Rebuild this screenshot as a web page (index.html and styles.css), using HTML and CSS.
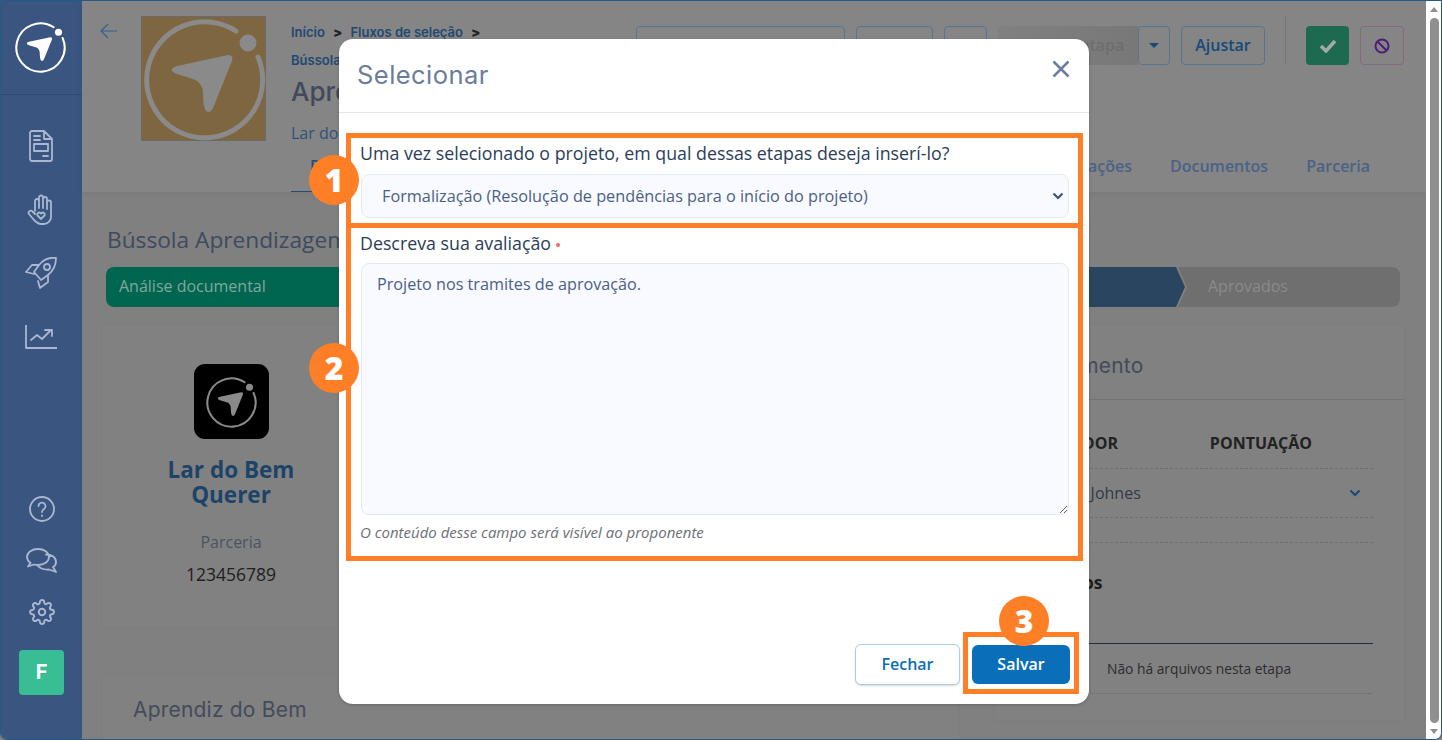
FILE: index.html
```html
<!DOCTYPE html>
<html lang="pt-BR">
	<head>
		<meta charset="utf-8" />
		<title>Selecionar</title>
		<link rel="stylesheet" href="styles.css">
	</head>
	<body>
		<svg class="defs" width="0" height="0">
			<symbol id="brand" viewBox="0 0 125 125">
				<path d="M117 41A58 58 0 1 1 95 15" fill="none" stroke="currentColor" stroke-width="5" stroke-linecap="round" />
				<circle cx="107" cy="27" r="8.5" fill="currentColor" />
				<path d="M87 39Q93 39 91 45L72 92Q69 98 65 95Q62 91 62 78Q62 66 52 63L36 58Q30 56 31 53Q32 51 36 50Z" fill="currentColor" />
			</symbol>
		</svg>

		<div id="wrapper">
			<nav class="sidebar">
				<div class="brand">
					<svg width="52" height="52"><use href="#brand" /></svg>
				</div>
				<div class="side-top">
					<svg width="24" height="32" viewBox="0 0 24 32"><path d="M3 1H15L23 9V29a2 2 0 0 1-2 2H3a2 2 0 0 1-2-2V3a2 2 0 0 1 2-2ZM15 1V9H23M5 6H11M5 10H11M5 14H19V21H5ZM14 26H19" /></svg>
					<svg width="28" height="31" viewBox="0 0 28 31"><path d="M8 17V7a2 2 0 0 1 4 0V3.500a2 2 0 0 1 4 0V5a2 2 0 0 1 4 0V8.500a2 2 0 0 1 4 0V23a7 7 0 0 1-7 7H14c-3 0-5-2-7-4L2 20c-1.500-2 1-4 3-3L8 20M12 7V14M16 5V14M20 8.500V15M14 25L10.500 21.500a2 2 0 0 1 3-2.500L14 19.500L14.500 19a2 2 0 0 1 3 2.500Z" /></svg>
					<svg width="32" height="32" viewBox="0 0 32 32"><path d="M31 1C24 0 18 3 14 8L9 15L16 23L23 18C28 14 31 8 31 1ZM14 8H7L1 15L9 17M23 18V25L15 31L13 24" /><circle cx="22" cy="10" r="3" /></svg>
					<svg class="side-chart" width="32" height="24" viewBox="0 0 32 24"><path d="M1 0V23H32M6 15L12 10L17 14L25 6M20 5H27V11" /></svg>
				</div>
				<div class="side-bottom">
					<svg width="26" height="26" viewBox="0 0 26 26"><circle cx="13" cy="13" r="12" /><path d="M9.500 10a3.500 3.500 0 1 1 5.500 3c-1.300.8-2 1.500-2 3M13 19.500V20" /></svg>
					<svg width="31" height="25" viewBox="0 0 31 25"><path d="M12 1C6 1 1 4.500 1 9c0 2.500 1.500 4.500 3.500 6L2 18.500L8 16.500C9.500 17 11 17 12 17c6 0 11-3.500 11-8S18 1 12 1ZM20 6.500C26 6.500 30 9.500 30 14c0 2-1 4-3 5L30 24L23 21.500C18 22 14 20.500 11 17" /></svg>
					<svg width="26" height="26" viewBox="0 0 24 24"><path d="M12 15a3 3 0 1 0 0-6 3 3 0 0 0 0 6z" /><path d="M19.400 15a1.650 1.650 0 0 0 .33 1.820l.06.06a2 2 0 0 1 0 2.830 2 2 0 0 1-2.830 0l-.06-.06a1.650 1.650 0 0 0-1.820-.33 1.650 1.650 0 0 0-1 1.510V21a2 2 0 0 1-2 2 2 2 0 0 1-2-2v-.09A1.650 1.650 0 0 0 9 19.400a1.650 1.650 0 0 0-1.820.33l-.06.06a2 2 0 0 1-2.830 0 2 2 0 0 1 0-2.830l.06-.06a1.650 1.650 0 0 0 .33-1.820 1.650 1.650 0 0 0-1.510-1H3a2 2 0 0 1-2-2 2 2 0 0 1 2-2h.09A1.650 1.650 0 0 0 4.600 9a1.650 1.650 0 0 0-.33-1.820l-.06-.06a2 2 0 0 1 0-2.830 2 2 0 0 1 2.830 0l.06.06a1.650 1.650 0 0 0 1.820.33H9a1.650 1.650 0 0 0 1-1.510V3a2 2 0 0 1 2-2 2 2 0 0 1 2 2v.09a1.650 1.650 0 0 0 1 1.510 1.650 1.650 0 0 0 1.820-.33l.06-.06a2 2 0 0 1 2.830 0 2 2 0 0 1 0 2.830l-.06.06a1.650 1.650 0 0 0-.33 1.820V9a1.650 1.650 0 0 0 1.510 1H21a2 2 0 0 1 2 2 2 2 0 0 1-2 2h-.09a1.650 1.650 0 0 0-1.510 1z" /></svg>
					<div class="avatar">F</div>
				</div>
			</nav>

			<main class="content">
				<header class="top">
					<svg class="back" width="18" height="18" viewBox="0 0 18 18"><path d="M17 9H1M8 2L1 9L8 16" /></svg>
					<div class="cover">
						<svg width="125" height="125"><use href="#brand" /></svg>
					</div>
					<div class="top-main">
						<div class="top-row">
							<div class="info">
								<p class="crumbs">Início <b>&gt;</b> Fluxos de seleção <b>&gt;</b><br>Bússola Aprendizagem</p>
								<h1>Aprendiz do Bem</h1>
								<p class="org">Lar do Bem Querer</p>
							</div>
							<div class="actions">
								<div class="search"></div>
								<div class="btn btn-a"></div>
								<div class="btn btn-b"></div>
								<div class="stage">Próxima etapa</div>
								<div class="btn btn-caret"><i></i></div>
								<div class="btn btn-adjust">Ajustar</div>
								<div class="rule"></div>
								<div class="btn btn-ok">
									<svg width="18" height="14" viewBox="0 0 18 14"><path d="M2 7L7 12L16 2" /></svg>
								</div>
								<div class="btn btn-no">
									<svg width="16" height="16" viewBox="0 0 16 16"><circle cx="8" cy="8" r="6.500" /><path d="M3.500 3.500L12.500 12.500" /></svg>
								</div>
							</div>
						</div>
						<div class="tabs">
							<span class="on">Projeto</span>
							<span>Avaliações</span>
							<span>Documentos</span>
							<span>Parceria</span>
						</div>
					</div>
				</header>

				<section class="page">
					<h2>Bússola Aprendizagem</h2>
					<div class="steps">
						<div class="step-done">Análise documental</div>
						<div class="step-now"></div>
						<div class="step-next">Aprovados</div>
					</div>
					<div class="columns">
						<div class="col-left">
							<article class="card card-org">
								<div class="org-logo">
									<svg width="52" height="52"><use href="#brand" /></svg>
								</div>
								<h3>Lar do Bem Querer</h3>
								<p class="org-label">Parceria</p>
								<p class="org-code">123456789</p>
							</article>
							<article class="card card-name">
								<h4>Aprendiz do Bem</h4>
							</article>
						</div>
						<article class="card card-eval">
							<h4>Julgamento</h4>
							<div class="eval-body">
								<div class="eval-head"><span>AVALIADOR</span><span>PONTUAÇÃO</span></div>
								<div class="eval-row">
									<span>Mariana Johnes</span>
									<svg width="12" height="8" viewBox="0 0 12 8"><path d="M1.500 1.500L6 6L10.500 1.500" /></svg>
								</div>
								<div class="eval-empty"></div>
								<h5>Arquivos</h5>
								<p class="no-files">Não há arquivos nesta etapa</p>
							</div>
						</article>
					</div>
				</section>
			</main>

			<div class="scrollbar">
				<i class="arrow-up"></i>
				<div class="thumb"></div>
				<i class="arrow-down"></i>
			</div>

			<div class="modal">
				<div class="modal-head">
					<span>Selecionar</span>
					<svg width="18" height="18" viewBox="0 0 18 18"><path d="M1.500 1.500L16.500 16.500M16.500 1.500L1.500 16.500" /></svg>
				</div>
				<div class="modal-body">
					<label class="label-first">Uma vez selecionado o projeto, em qual dessas etapas deseja inserí-lo?</label>
					<div class="select-box">
						<select>
							<option>Formalização (Resolução de pendências para o início do projeto)</option>
						</select>
						<svg width="12" height="8" viewBox="0 0 12 8"><path d="M1.500 1.500L6 6L10.500 1.500" /></svg>
					</div>
					<label class="label-second">Descreva sua avaliação <em></em></label>
					<textarea>Projeto nos tramites de aprovação.</textarea>
					<p class="hint">O conteúdo desse campo será visível ao proponente</p>
				</div>
				<div class="modal-foot">
					<button class="close">Fechar</button>
					<button class="save">Salvar</button>
				</div>
			</div>

			<div class="mark mark-one"></div>
			<div class="mark mark-two"></div>
			<div class="mark mark-three"></div>
			<div class="dot dot-one">1</div>
			<div class="dot dot-two">2</div>
			<div class="dot dot-three">3</div>
		</div>
	</body>
</html>
```

FILE: styles.css
```css
*{
	box-sizing: border-box;
}

html, body{
	margin: 0;
	height: 100%;
	overflow: hidden;
}

body{
	background-color: #808080;
	font-family: "Open Sans", "Liberation Sans", sans-serif;
}

p, h1, h2, h3, h4, h5{
	margin: 0;
}

.defs{
	position: absolute;
}

#wrapper{
	position: relative;
	display: flex;
	width: 1442px;
	height: 740px;
	overflow: hidden;
	border: 1px solid #245a86;
	border-radius: 0 0 7px 7px;
	background-color: #808080;
}

/* sidebar */
.sidebar{
	display: flex;
	flex-direction: column;
	width: 81px;
	flex-shrink: 0;
	background-color: #3a5580;
}

.sidebar svg{
	fill: none;
	stroke: #a9b8d0;
	stroke-width: 1.800;
	stroke-linecap: round;
	stroke-linejoin: round;
}

.brand{
	display: flex;
	justify-content: center;
	padding: 20px 3px 0 0;
	height: 94px;
	border-bottom: 1px solid #2c4a72;
	color: #fff;
}

.brand svg{
	stroke: none;
	fill: none;
}

.side-top{
	display: flex;
	flex-direction: column;
	align-items: center;
	gap: 32px;
	padding: 35px 2px 0 0;
}

.side-top .side-chart{
	margin-top: 4px;
}

.side-bottom{
	display: flex;
	flex-direction: column;
	align-items: center;
	gap: 26px;
	margin-top: auto;
	padding-bottom: 44px;
}

.avatar{
	width: 45px;
	height: 45px;
	margin-top: -1px;
	border-radius: 4px;
	background-color: #38bd94;
	color: #fff;
	font-family: "Inter", sans-serif;
	font-size: 20px;
	font-weight: 700;
	line-height: 45px;
	text-align: center;
}

/* page behind the modal */
.content{
	flex: 1;
	min-width: 0;
}

.top{
	display: flex;
	height: 191px;
	padding: 15px 0 0 18px;
	background-color: #858585;
	box-shadow: 0 2px 6px rgba(0,0,0,.06);
}

.back{
	margin: 6px 0 0 0;
	fill: none;
	stroke: #2f5f8f;
	stroke-width: 1.200;
	flex-shrink: 0;
}

.cover{
	width: 125px;
	height: 125px;
	margin: 0 25px 0 23px;
	flex-shrink: 0;
	border: 1px solid #6a6a6a;
	background-color: #7d6640;
	color: #8a8a8a;
}

.cover svg{
	display: block;
	margin: -1px;
}

.top-main{
	flex: 1;
	min-width: 0;
}

.top-row{
	display: flex;
	height: 135px;
}

.info{
	width: 345px;
	flex-shrink: 0;
}

.crumbs{
	padding-top: 2px;
	color: #1f4872;
	font-family: "Inter", sans-serif;
	font-size: 13px;
	font-weight: 600;
	line-height: 28px;
}

.crumbs b{
	margin: 0 5px;
	color: #222;
}

h1{
	margin-top: 2px;
	color: #404a5c;
	font-family: "Inter", sans-serif;
	font-size: 26px;
	font-weight: 500;
}

.org{
	margin-top: 15px;
	color: #2e5278;
	font-size: 16px;
}

.actions{
	display: flex;
	gap: 11px;
	padding-top: 10px;
}

.search, .btn{
	height: 39px;
	border: 1px solid #557590;
	border-radius: 4px;
}

.search{
	width: 209px;
}

.btn{
	color: #154a7a;
	font-size: 16px;
	font-weight: 600;
	line-height: 37px;
	text-align: center;
}

.btn-a{
	width: 77px;
}

.btn-b{
	width: 43px;
}

.stage{
	width: 140px;
	height: 39px;
	margin-right: -11px;
	border-radius: 4px 0 0 4px;
	background-image: linear-gradient(to right, #808080, #787878);
	color: #6e6e6e;
	font-size: 16px;
	font-weight: 600;
	line-height: 39px;
	text-align: center;
}

.btn-caret{
	display: flex;
	align-items: center;
	justify-content: center;
	width: 32px;
}

.btn-caret i{
	border-top: 5px solid #154a7a;
	border-left: 5px solid transparent;
	border-right: 5px solid transparent;
}

.btn-adjust{
	width: 84px;
}

.rule{
	width: 1px;
	height: 49px;
	margin: -10px 9px 0 9px;
	background-color: #777;
}

.btn-ok{
	display: flex;
	align-items: center;
	justify-content: center;
	width: 43px;
	border: none;
	background-color: #1d6a50;
}

.btn-ok svg{
	fill: none;
	stroke: #a8a8a8;
	stroke-width: 3.500;
}

.btn-no{
	display: flex;
	align-items: center;
	justify-content: center;
	width: 44px;
	border-color: #836a80;
}

.btn-no svg{
	fill: none;
	stroke: #4c1d78;
	stroke-width: 2;
}

.tabs{
	display: flex;
	width: 1098px;
	height: 41px;
	color: #4a6288;
	font-size: 16px;
	font-weight: 600;
}

.tabs span{
	padding: 4px 19px 0 19px;
}

.tabs .on{
	margin-right: auto;
	border-bottom: 1px solid #1f4d78;
	color: #1f4d78;
}

.page{
	padding: 0 26px 0 24px;
}

h2{
	margin-left: 1px;
	padding-top: 31px;
	color: #3d4a60;
	font-size: 22.700px;
	font-weight: 400;
	line-height: 34px;
}

.steps{
	display: flex;
	height: 40px;
	margin: 10px 0 18px 0;
	line-height: 38px;
	font-size: 16px;
}

.step-done{
	width: 400px;
	padding-left: 13px;
	border-radius: 8px 0 0 8px;
	background-color: #006650;
	color: #80a89c;
}

.step-now{
	flex: 1;
	background-color: #2a4560;
	clip-path: polygon(0 0, calc(100% - 9px) 0, 100% 50%, calc(100% - 9px) 100%, 0 100%);
}

.step-next{
	width: 222px;
	margin-left: -7px;
	padding-left: 30px;
	border-radius: 0 8px 8px 0;
	background-color: #6f6f6f;
	color: #8a8a8a;
	clip-path: polygon(0 0, 100% 0, 100% 100%, 0 100%, 9px 50%);
}

.columns{
	display: flex;
	margin-left: -3px;
	margin-right: -4px;
	gap: 37px;
}

.col-left{
	width: 855px;
}

.card{
	background-color: #818181;
	box-shadow: 0 0 4px rgba(0,0,0,.04);
}

.card h4{
	color: #434c5a;
	font-family: "Inter", sans-serif;
	font-size: 21px;
	font-weight: 400;
	letter-spacing: .2px;
}

.card-org{
	width: 256px;
	height: 302px;
	padding-top: 39px;
	text-align: center;
}

.org-logo{
	display: flex;
	align-items: center;
	justify-content: center;
	width: 75px;
	height: 75px;
	margin: 0 auto;
	border-radius: 11px;
	background-color: #000;
	color: #8a8a8a;
}

.card-org h3{
	width: 170px;
	margin: 18px auto 0 auto;
	color: #1c4468;
	font-size: 22.500px;
	font-weight: 700;
	line-height: 25px;
}

.org-label{
	margin-top: 24px;
	color: #4b5361;
	font-size: 16px;
}

.org-code{
	margin-top: 9px;
	color: #202020;
	font-size: 17.500px;
}

.card-name{
	height: 70px;
	margin-top: 48px;
	padding: 22px 0 0 30px;
}

.card-eval{
	width: 409px;
	height: 395px;
	padding-top: 28px;
}

.card-eval h4{
	padding: 0 0 21px 30px;
	border-bottom: 1px solid #737373;
}

.eval-body{
	padding: 0 31px 0 30px;
}

.eval-head{
	display: flex;
	justify-content: space-between;
	height: 69px;
	padding: 32px 61px 0 0;
	border-bottom: 1px dashed #667078;
	color: #222;
	font-size: 16px;
	font-weight: 700;
}

.eval-row{
	display: flex;
	align-items: center;
	justify-content: space-between;
	height: 49px;
	padding-right: 12px;
	border-bottom: 1px dashed #667078;
	color: #303a44;
	font-size: 16px;
}

.eval-row svg{
	fill: none;
	stroke: #1c4a78;
	stroke-width: 2.200;
}

.eval-empty{
	height: 25px;
	border-bottom: 1px dashed #667078;
}

h5{
	height: 101px;
	padding-top: 27px;
	border-bottom: 1px solid #1f2d42;
	color: #1c1c1c;
	font-size: 17.500px;
	font-weight: 700;
}

.no-files{
	height: 50px;
	padding: 15px 0 0 82px;
	border-bottom: 1px dotted #6a6a6a;
	color: #2c2c30;
	font-size: 13.800px;
}

/* fake window scrollbar */
.scrollbar{
	display: flex;
	flex-direction: column;
	align-items: center;
	width: 15px;
	flex-shrink: 0;
	padding: 6px 1px 5px 2px;
	background-color: #fff;
}

.thumb{
	flex: 1;
	width: 9px;
	margin: 6px 0;
	border-radius: 5px;
	background-color: #8f8f8f;
}

.arrow-up{
	border-bottom: 5px solid #8f8f8f;
	border-left: 4px solid transparent;
	border-right: 4px solid transparent;
}

.arrow-down{
	border-top: 5px solid #8f8f8f;
	border-left: 4px solid transparent;
	border-right: 4px solid transparent;
}

/* modal */
.modal{
	position: absolute;
	left: 338px;
	top: 38px;
	display: flex;
	flex-direction: column;
	width: 750px;
	height: 665px;
	border-radius: 14px;
	background-color: #fff;
	box-shadow: 0 1px 3px rgba(0,0,0,.2);
}

.modal-head{
	display: flex;
	align-items: center;
	justify-content: space-between;
	height: 74px;
	padding: 0 19px 2px 18px;
	border-bottom: 1px solid #e3e6ea;
	color: #6a7d9c;
	font-family: "Inter", sans-serif;
	font-size: 25.500px;
	font-weight: 400;
	letter-spacing: .45px;
}

.modal-head svg{
	margin-top: -12px;
	fill: none;
	stroke: #6a7d9c;
	stroke-width: 2.500;
}

.modal-body{
	display: flex;
	flex-direction: column;
	padding: 29px 20px 0 21px;
}

label{
	display: block;
	color: #2b3d57;
	font-size: 17.800px;
	line-height: 22px;
}

.select-box{
	position: relative;
	margin: 10px 0 0 1px;
}

.select-box svg{
	position: absolute;
	right: 5px;
	top: 18px;
	fill: none;
	stroke: #3d5278;
	stroke-width: 2.200;
}

select{
	display: block;
	width: 708px;
	height: 44px;
	padding: 0 30px 0 20px;
	border: 1px solid #e2e9f4;
	border-radius: 8px;
	background-color: #f8faff;
	color: #4a6085;
	font-family: inherit;
	font-size: 16.250px;
	appearance: none;
}

.label-second{
	margin-top: 14px;
}

.label-second em{
	display: inline-block;
	width: 4px;
	height: 4px;
	margin-bottom: 3px;
	border-radius: 50%;
	background-color: #ef6b6b;
}

textarea{
	display: block;
	width: 708px;
	height: 252px;
	margin: 9px 0 0 1px;
	padding: 10px 15px;
	border: 1px solid #e2e9f4;
	border-radius: 8px;
	background-color: #f8faff;
	color: #4a6085;
	font-family: inherit;
	font-size: 16.200px;
	line-height: 20px;
	outline: none;
}

.hint{
	margin-top: 7px;
	color: #6b6f76;
	font-size: 15px;
	font-style: italic;
}

.modal-foot{
	display: flex;
	align-items: center;
	justify-content: flex-end;
	gap: 12px;
	margin-top: auto;
	padding: 0 19px 19px 0;
}

.modal-foot button{
	padding: 0 0 2px 0;
	font-family: inherit;
	font-size: 16px;
	font-weight: 600;
}

.close{
	width: 105px;
	height: 41px;
	border: 1px solid #a9cde6;
	border-radius: 6px;
	background-color: #fff;
	box-shadow: 0 1px 2px rgba(0,0,0,.15);
	color: #0a6fb8;
}

.save{
	width: 98px;
	height: 39px;
	border: none;
	border-radius: 6px;
	background-color: #0a6fb8;
	color: #fff;
}

/* orange callouts drawn over the modal */
.mark{
	position: absolute;
	border: 5px solid #ff7f27;
}

.mark-one{
	left: 345px;
	top: 132px;
	width: 737px;
	height: 95px;
}

.mark-two{
	left: 345px;
	top: 222px;
	width: 737px;
	height: 338px;
}

.mark-three{
	left: 962px;
	top: 631px;
	width: 116px;
	height: 62px;
}

.dot{
	position: absolute;
	width: 50px;
	height: 50px;
	border-radius: 50%;
	background-color: #ff7f27;
	color: #fff;
	font-size: 32px;
	font-weight: 800;
	line-height: 50px;
	text-align: center;
}

.dot-one{
	left: 308px;
	top: 154px;
}

.dot-two{
	left: 308px;
	top: 342px;
}

.dot-three{
	left: 998px;
	top: 595px;
}
```
